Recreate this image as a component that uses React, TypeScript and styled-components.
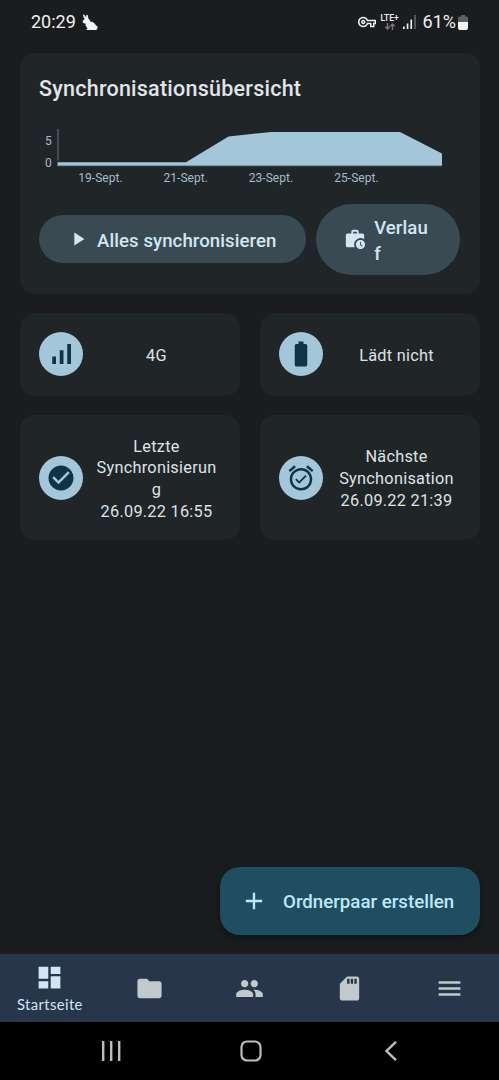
import React from "react";
import styled, { createGlobalStyle } from "styled-components";
import {
  MdAdd,
  MdAlarmOn,
  MdBatteryFull,
  MdCheckCircle,
  MdDashboard,
  MdFolder,
  MdMenu,
  MdOutlineVpnKey,
  MdPeople,
  MdPlayArrow,
  MdSdCard,
  MdSignalCellularAlt,
  MdWorkHistory,
} from "react-icons/md";

const GlobalStyle = createGlobalStyle`
  * { box-sizing: border-box; }
  body { margin: 0; background: #1b1c1e; font-family: Roboto, "Liberation Sans", sans-serif; }
  svg { display: block; flex-shrink: 0; }
`;

const Screen = styled.div`
  width: 499px;
  height: 1080px;
  display: flex;
  flex-direction: column;
  background: #1b1c1e;
  overflow: hidden;
`;

const StatusBar = styled.header`
  height: 53px;
  padding: 0 31px 9px 31px;
  display: flex;
  align-items: center;
  color: #f0f1f2;
  flex-shrink: 0;
`;

const StatusText = styled.span<{ $before?: number; $after?: number }>`
  font-size: 18px;
  line-height: 22px;
  margin-left: ${(p) => p.$before ?? 0}px;
  margin-right: ${(p) => p.$after ?? 0}px;
`;

const StatusIcons = styled.div`
  display: flex;
  align-items: center;
  margin-left: auto;
`;

const Network = styled.div`
  display: flex;
  flex-direction: column;
  align-items: center;
  width: 18px;
  margin: 0 4px 0 5px;
  font-size: 8.5px;
  line-height: 9px;
  font-weight: 500;
`;

const Content = styled.main`
  flex: 1;
  padding: 0 19.5px;
  display: flex;
  flex-direction: column;
  gap: 19.5px;
`;

const Card = styled.section`
  background: #202528;
  border-radius: 15px;
`;

const Overview = styled(Card)`
  height: 240.5px;
  padding: 23px 19.5px 0;
`;

const Title = styled.h1`
  margin: 0;
  font-size: 21.5px;
  line-height: 26px;
  font-weight: 500;
  letter-spacing: 0.24px;
  color: #e1e4e8;
`;

const Chart = styled.svg`
  margin-top: 22px;
  font-family: Roboto, sans-serif;
  font-size: 12px;
  fill: #a4bccb;
`;

const Actions = styled.div`
  display: flex;
  align-items: center;
  gap: 10px;
  margin-top: 10.5px;
`;

const ActionButton = styled.button<{ $width: number; $height: number }>`
  width: ${(p) => p.$width}px;
  height: ${(p) => p.$height}px;
  padding: 0 0 0 28px;
  border: 0;
  border-radius: 36px;
  display: flex;
  align-items: center;
  gap: 8px;
  background: #3a4a53;
  color: #d3e6f3;
  font: 500 18.6px/26.5px Roboto, sans-serif;
  letter-spacing: 0.07px;
  text-align: left;
  white-space: nowrap;
`;

const ButtonLabel = styled.span`
  padding-top: 4px;
`;

const Line = styled.span`
  display: block;
`;

const CardGrid = styled.div`
  display: grid;
  grid-template-columns: 220px 220px;
  grid-template-rows: 82.5px 125px;
  gap: 19.5px 20px;
`;

const InfoCard = styled(Card)`
  display: flex;
  align-items: center;
  padding-left: 19.5px;
`;

const Badge = styled.div`
  width: 44px;
  height: 44px;
  border-radius: 50%;
  display: grid;
  place-items: center;
  background: #a4c6d9;
  color: #0e3445;
`;

const InfoText = styled.div`
  width: 127px;
  margin-left: 10px;
  padding-top: 3px;
  text-align: center;
  font-size: 16.3px;
  line-height: 21.7px;
  letter-spacing: 0.27px;
  color: #dfe2e5;
`;

const Fab = styled.button`
  align-self: flex-end;
  width: 259.5px;
  height: 68px;
  margin-top: auto;
  margin-bottom: 19px;
  padding: 0 0 0 20px;
  border: 0;
  border-radius: 20px;
  display: flex;
  align-items: center;
  gap: 15px;
  background: #1f4e61;
  color: #bfe6fb;
  box-shadow: 0 4px 9px rgba(0, 0, 0, 0.35);
  font: 500 18.7px/26px Roboto, sans-serif;
  white-space: nowrap;
`;

const FabLabel = styled.span`
  padding-top: 2px;
`;

const TabBar = styled.nav`
  height: 68px;
  display: grid;
  grid-template-columns: repeat(5, 1fr);
  background: #27364b;
  color: #c1c9cd;
  flex-shrink: 0;
`;

const Tab = styled.div<{ $active?: boolean }>`
  display: flex;
  flex-direction: column;
  align-items: center;
  justify-content: center;
  color: ${(p) => (p.$active ? "#d3e6f5" : "inherit")};
`;

const TabLabel = styled.span`
  font: 400 14.8px/19px Lato, sans-serif;
  letter-spacing: 0.4px;
  margin-top: 3px;
`;

const SystemBar = styled.footer`
  height: 58px;
  background: #000;
  display: flex;
  align-items: center;
  gap: 118.5px;
  padding: 0 0 1px 101px;
  flex-shrink: 0;
`;

const Rabbit = () => (
  <svg width="16" height="17" viewBox="0 0 16 17" fill="#f4f5f6">
    <path d="M1 .8Q1.800.2 2.700 1.300L4.200 3.500 4.300 1Q5 .2 5.800 1.200L6.500 5Q8.200 5.500 8 7.400 12.500 7.600 14 11.600 15.800 12 15.700 13.700 15.500 14.700 14.600 14.900V16H4.500Q4.300 14.600 5.600 14.200L4.500 13Q3.200 11.700 3.600 9.600 1.300 9.500.6 8.200.3 6.300 2.800 5 1 3 1 .8z" />
  </svg>
);

const DataArrows = () => (
  <svg width="12" height="7" viewBox="0 0 12 7" fill="none" stroke="#777a7c" strokeWidth="1.4">
    <path d="M3.500 0v6M1.300 3.800l2.200 2.200L5.700 3.800M8.500 7V1M6.300 3.200l2.200-2.200 2.200 2.200" />
  </svg>
);

const Reception = () => (
  <svg width="14" height="14" viewBox="0 0 14 14">
    <path d="M0 11.500h1.700v2.500H0zM3.700 8.500h1.700v5.500H3.700zM7.400 4.500h1.700v9.500H7.400z" fill="#f0f1f2" />
    <path d="M11.300 0h1.500v14h-1.500z" fill="#66696b" />
  </svg>
);

const Battery = () => (
  <svg width="10" height="15" viewBox="0 0 10 15">
    <path d="M3 0h4v1.500h1.500Q10 1.500 10 3v5H0V3q0-1.500 1.500-1.500H3z" fill="#5d6062" />
    <path d="M0 7h10v6q0 2-2 2H2q-2 0-2-2z" fill="#f2f3f4" />
  </svg>
);

const ticks = [
  { x: 61.5, label: "19-Sept." },
  { x: 146.7, label: "21-Sept." },
  { x: 232, label: "23-Sept." },
  { x: 317.5, label: "25-Sept." },
];

const SyncChart = () => (
  <Chart width="420" height="69" viewBox="0 0 420 69">
    <path d="M19 36.500V5" stroke="#506872" strokeWidth="1.300" fill="none" />
    <path d="M18.500 38.300H147L189.500 12.500 232 8H361L403 29.500V42H18.500z" fill="#a4c6d9" />
    <path d="M18.500 41.700H403" stroke="#6d8795" strokeWidth="1" />
    <text x="6" y="21">5</text>
    <text x="6" y="43">0</text>
    {ticks.map((t) => (
      <text key={t.label} x={t.x} y="58" textAnchor="middle" letterSpacing="0.04">
        {t.label}
      </text>
    ))}
  </Chart>
);

const cards = [
  { icon: MdSignalCellularAlt, lines: ["4G"] },
  { icon: MdBatteryFull, lines: ["Lädt nicht"] },
  { icon: MdCheckCircle, lines: ["Letzte", "Synchronisierun", "g", "26.09.22 16:55"] },
  { icon: MdAlarmOn, lines: ["Nächste", "Synchonisation", "26.09.22 21:39"] },
];

const App = () => (
  <>
    <GlobalStyle />
    <Screen>
      <StatusBar>
        <StatusText $after={6}>20:29</StatusText>
        <Rabbit />
        <StatusIcons>
          <MdOutlineVpnKey size={18} />
          <Network>
            LTE+
            <DataArrows />
          </Network>
          <Reception />
          <StatusText $before={6} $after={2}>61%</StatusText>
          <Battery />
        </StatusIcons>
      </StatusBar>
      <Content>
        <Overview>
          <Title>Synchronisationsübersicht</Title>
          <SyncChart />
          <Actions>
            <ActionButton $width={267.5} $height={48.5}>
              <MdPlayArrow size={22} />
              <ButtonLabel>Alles synchronisieren</ButtonLabel>
            </ActionButton>
            <ActionButton $width={144} $height={71}>
              <MdWorkHistory size={22} />
              <ButtonLabel>
                <Line>Verlau</Line>
                <Line>f</Line>
              </ButtonLabel>
            </ActionButton>
          </Actions>
        </Overview>
        <CardGrid>
          {cards.map(({ icon: Icon, lines }) => (
            <InfoCard key={lines[0]}>
              <Badge>
                <Icon size={30} />
              </Badge>
              <InfoText>
                {lines.map((line) => (
                  <Line key={line}>{line}</Line>
                ))}
              </InfoText>
            </InfoCard>
          ))}
        </CardGrid>
        <Fab>
          <MdAdd size={28} />
          <FabLabel>Ordnerpaar erstellen</FabLabel>
        </Fab>
      </Content>
      <TabBar>
        <Tab $active>
          <MdDashboard size={29} />
          <TabLabel>Startseite</TabLabel>
        </Tab>
        <Tab><MdFolder size={29} /></Tab>
        <Tab><MdPeople size={29} /></Tab>
        <Tab><MdSdCard size={29} /></Tab>
        <Tab><MdMenu size={29} /></Tab>
      </TabBar>
      <SystemBar>
        <svg width="20" height="20" viewBox="0 0 20 20" fill="none" stroke="#bdbdbd" strokeWidth="2.400">
          <path d="M2.200 0v20M10.200 0v20M18.200 0v20" />
        </svg>
        <svg width="22" height="22" viewBox="0 0 22 22" fill="none" stroke="#bdbdbd" strokeWidth="2.200">
          <rect x="1.500" y="1.500" width="19" height="19" rx="5.500" />
        </svg>
        <svg width="20" height="20" viewBox="0 0 20 20" fill="none" stroke="#bdbdbd" strokeWidth="2.400">
          <path d="M16 .8L6.500 10l9.500 9.200" />
        </svg>
      </SystemBar>
    </Screen>
  </>
);

export default App;
